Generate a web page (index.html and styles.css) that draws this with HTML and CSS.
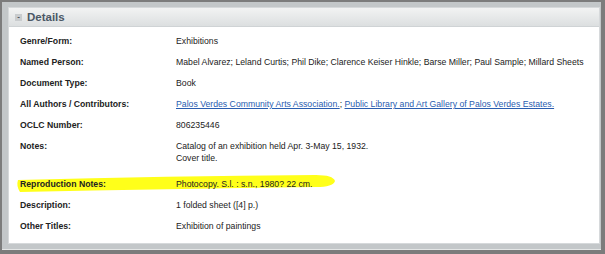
FILE: index.html
```html
<!DOCTYPE html>
<html>
<head>
<meta charset="utf-8">
<link rel="stylesheet" href="styles.css">
</head>
<body>
<div class="frame">
  <div class="panel">
    <div class="header">
      <span class="toggle">-</span>
      <span class="title">Details</span>
    </div>
    <div class="body">
      <div class="row"><div class="label">Genre/Form:</div><div class="value">Exhibitions</div></div>
      <div class="row"><div class="label">Named Person:</div><div class="value">Mabel Alvarez; Leland Curtis; Phil Dike; Clarence Keiser Hinkle; Barse Miller; Paul Sample; Millard Sheets</div></div>
      <div class="row"><div class="label">Document Type:</div><div class="value">Book</div></div>
      <div class="row"><div class="label">All Authors / Contributors:</div><div class="value"><a href="#">Palos Verdes Community Arts Association.</a>; <a href="#">Public Library and Art Gallery of Palos Verdes Estates.</a></div></div>
      <div class="row"><div class="label">OCLC Number:</div><div class="value">806235446</div></div>
      <div class="row"><div class="label">Notes:</div><div class="value">Catalog of an exhibition held Apr. 3-May 15, 1932.<br>Cover title.</div></div>
      <div class="row highlighted">
        <svg class="marker" viewBox="0 0 320 18" preserveAspectRatio="none"><path d="M2 6 Q150 2 300 1 Q317 1 319 7 Q317 13 300 13 Q150 15 4 18 Q0 12 2 6 Z" fill="#ffff1a"/></svg>
        <div class="label">Reproduction Notes:</div><div class="value">Photocopy. S.l. : s.n., 1980? 22 cm.</div>
      </div>
      <div class="row"><div class="label">Description:</div><div class="value">1 folded sheet ([4] p.)</div></div>
      <div class="row"><div class="label">Other Titles:</div><div class="value">Exhibition of paintings</div></div>
    </div>
  </div>
</div>
</body>
</html>
```
FILE: styles.css
```css
html, body {
  margin: 0;
  padding: 0;
}
body {
  width: 605px;
  height: 254px;
  background: #7c7c7c;
  font-family: "Liberation Sans", Arial, sans-serif;
  overflow: hidden;
}
.frame {
  box-sizing: border-box;
  margin: 2px 4px 0 2px;
  height: 248px;
  background: #c3c7c9;
  padding: 5px 1px 5px 6px;
  border-bottom: 1px solid #e4e6e6;
}
.panel {
  background: #fff;
  height: 100%;
  border: 1px solid #d6d9db;
  box-sizing: border-box;
}
.header {
  height: 18px;
  background: linear-gradient(#f2f3f3, #dcdfe0);
  border-bottom: 1px solid #cfd3d5;
  display: flex;
  align-items: center;
  padding-left: 6px;
  gap: 5px;
}
.toggle {
  display: inline-flex;
  align-items: center;
  justify-content: center;
  width: 7px;
  height: 7px;
  background: #c9ccce;
  color: #4a4f55;
  font-size: 8px;
  font-weight: bold;
  line-height: 1;
}
.title {
  font-size: 11.5px;
  font-weight: bold;
  color: #4b5866;
}
.body {
  padding: 8px 0 0 11px;
}
.row {
  display: flex;
  font-size: 8.7px;
  line-height: 12px;
  color: #222;
  margin-bottom: 9px;
  position: relative;
}
.label {
  width: 156px;
  font-weight: bold;
  flex: none;
}
.value {
  flex: 1;
}
.value a {
  color: #2a5db0;
}
.highlighted {
  margin-top: 14px;
}
.marker {
  position: absolute;
  left: -4px;
  top: -4px;
  width: 320px;
  height: 18px;
  z-index: 0;
}
.highlighted .label, .highlighted .value {
  position: relative;
  z-index: 1;
}
```
